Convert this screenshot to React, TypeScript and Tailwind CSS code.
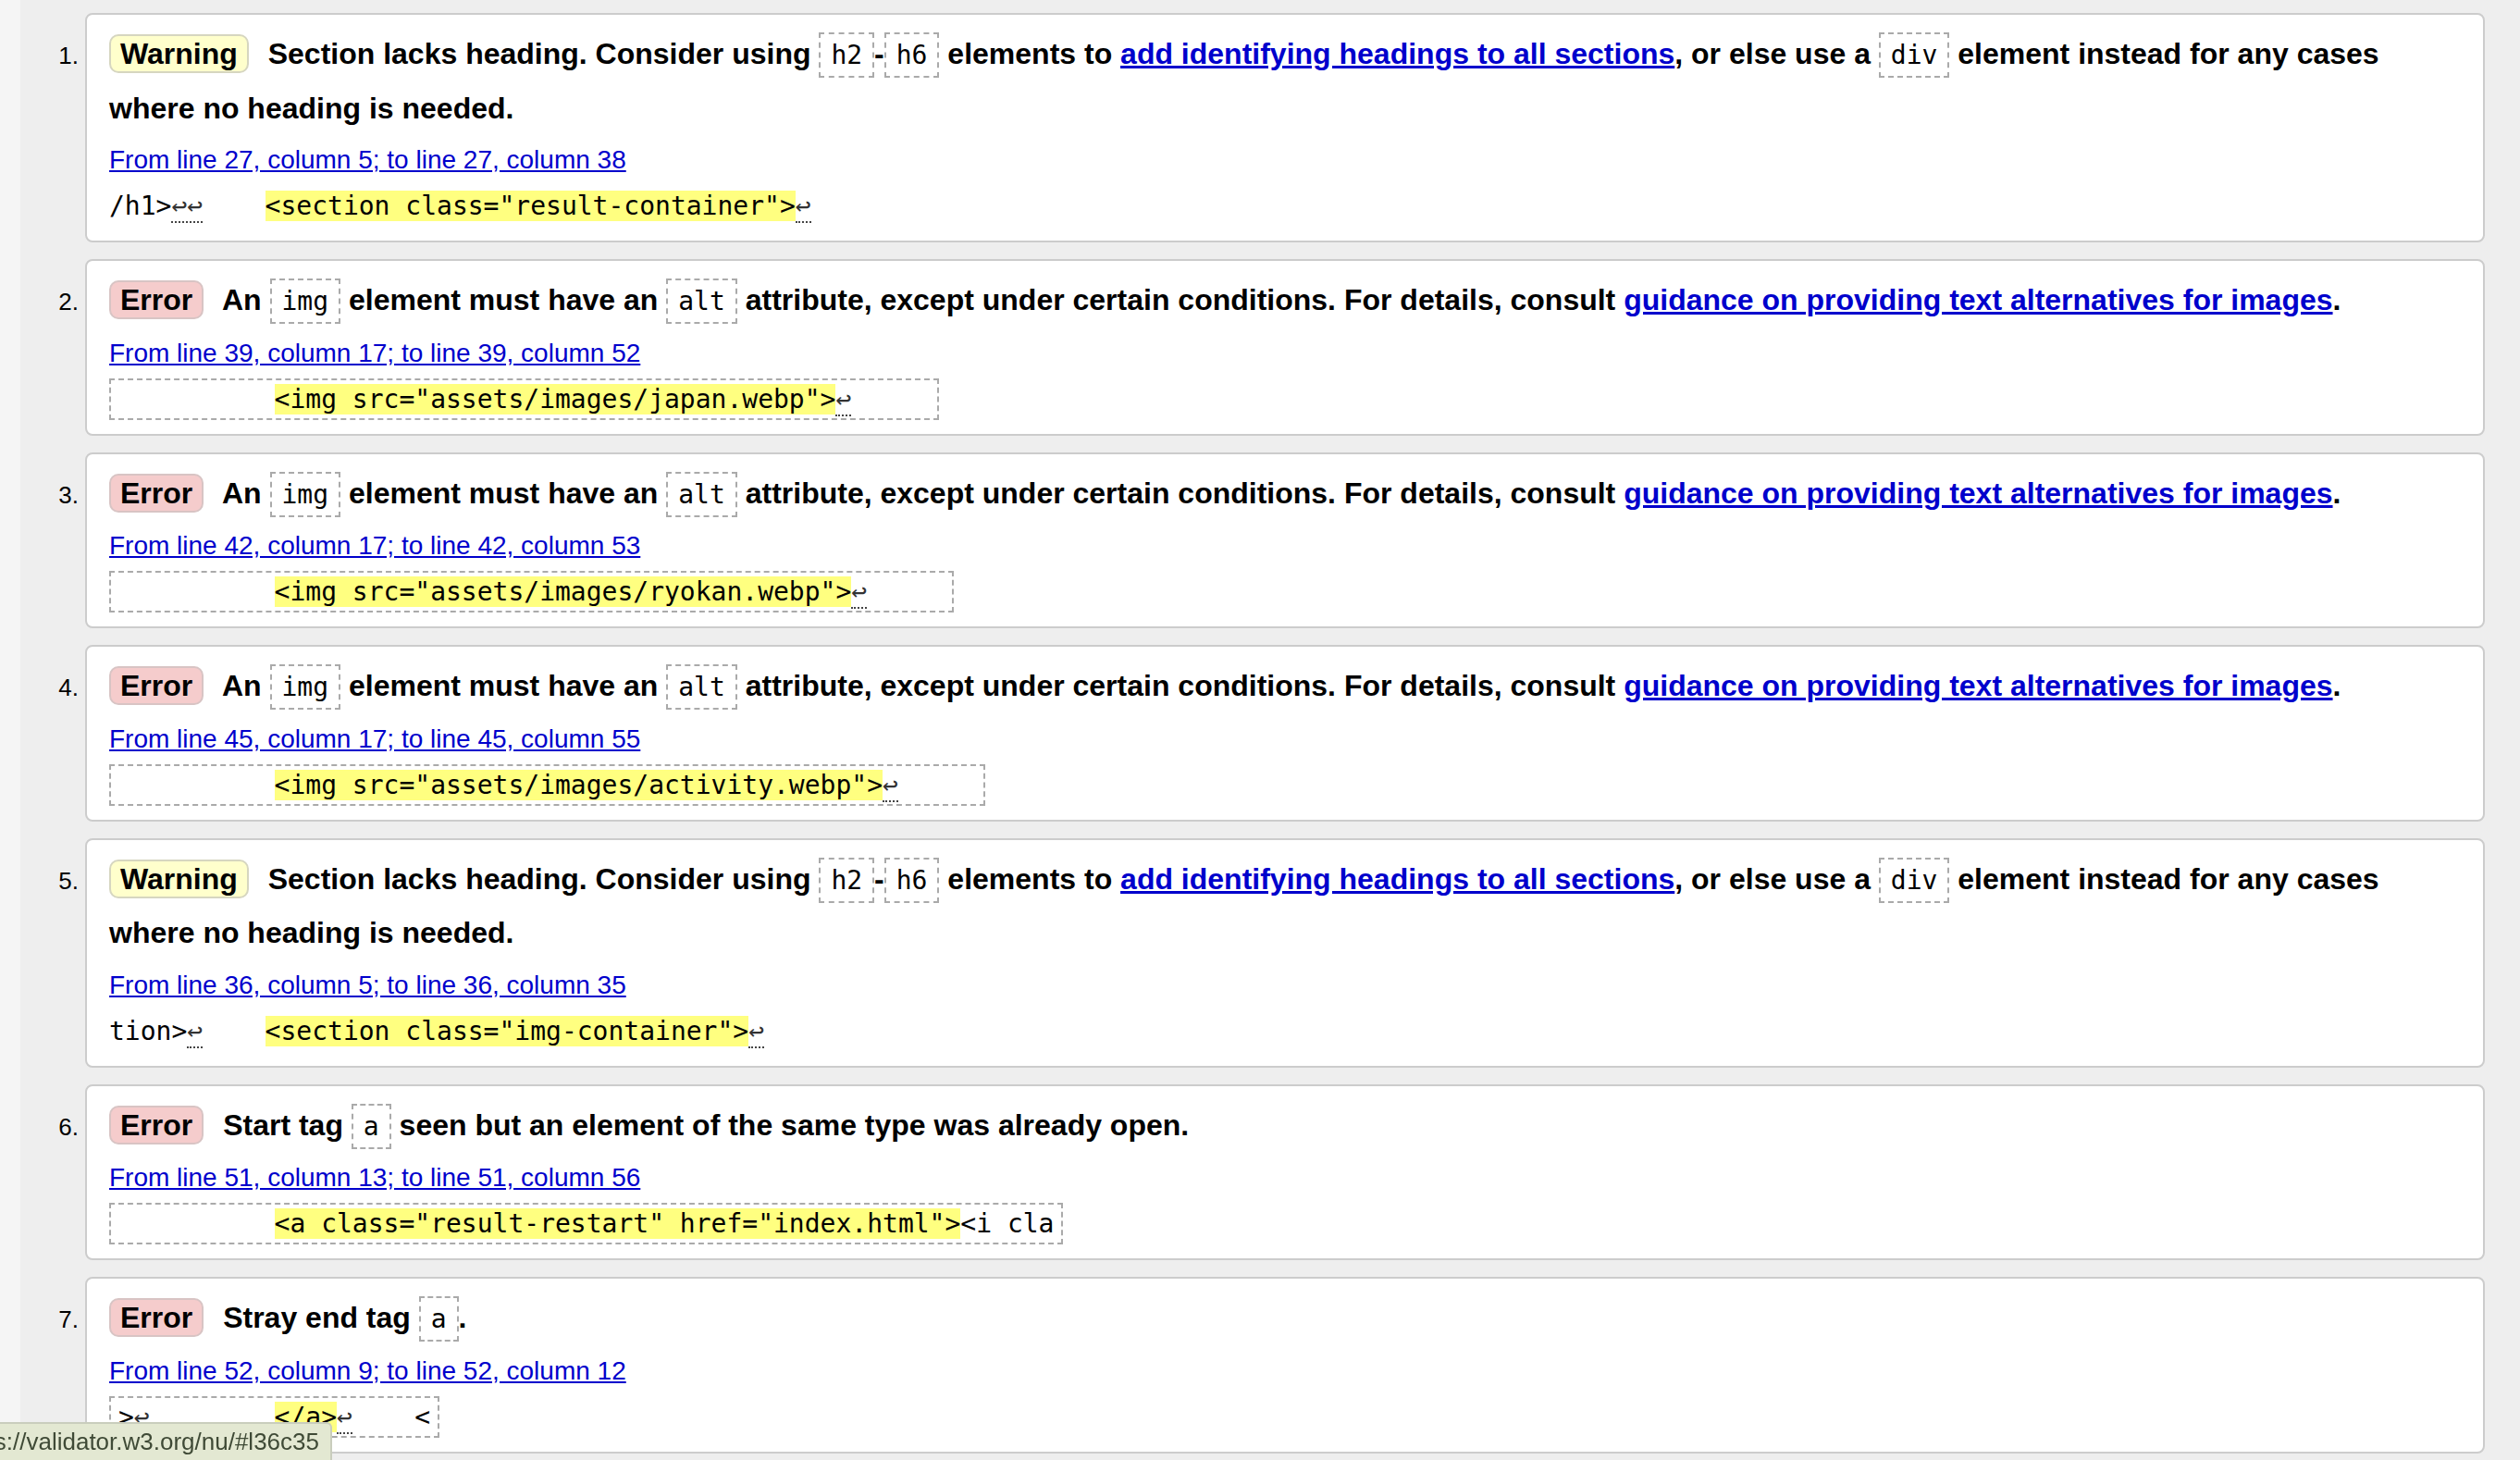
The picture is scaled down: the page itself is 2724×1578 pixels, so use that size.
import type { ReactNode } from 'react'

type Seg = { t: string; hl?: boolean; lf?: boolean }

type Msg = {
  kind: 'Warning' | 'Error'
  text: ReactNode
  loc: string
  boxed: boolean
  extract: Seg[]
}

const Code = ({ children }: { children: ReactNode }) => (
  <code className="rounded-none border-2 border-dashed border-[#aaa] px-[11px] py-[6px] font-['DejaVu_Sans_Mono',monospace] text-[28px] font-normal">
    {children}
  </code>
)

const A = ({ children }: { children: ReactNode }) => (
  <a href="#" className="text-[#0000cc] underline">
    {children}
  </a>
)

const headingText = (
  <>
    Section lacks heading. Consider using <Code>h2</Code>-<Code>h6</Code> elements to{' '}
    <A>add identifying headings to all sections</A>, or else use a <Code>div</Code> element
    instead for any cases where no heading is needed.
  </>
)

const imgText = (
  <>
    An <Code>img</Code> element must have an <Code>alt</Code> attribute, except under certain
    conditions. For details, consult <A>guidance on providing text alternatives for images</A>.
  </>
)

const MESSAGES: Msg[] = [
  {
    kind: 'Warning',
    text: headingText,
    loc: 'From line 27, column 5; to line 27, column 38',
    boxed: false,
    extract: [
      { t: '/h1>' },
      { t: '↩↩', lf: true },
      { t: '    ' },
      { t: '<section class="result-container">', hl: true },
      { t: '↩', lf: true },
    ],
  },
  {
    kind: 'Error',
    text: imgText,
    loc: 'From line 39, column 17; to line 39, column 52',
    boxed: true,
    extract: [
      { t: '          ' },
      { t: '<img src="assets/images/japan.webp">', hl: true },
      { t: '↩', lf: true },
      { t: '     ' },
    ],
  },
  {
    kind: 'Error',
    text: imgText,
    loc: 'From line 42, column 17; to line 42, column 53',
    boxed: true,
    extract: [
      { t: '          ' },
      { t: '<img src="assets/images/ryokan.webp">', hl: true },
      { t: '↩', lf: true },
      { t: '     ' },
    ],
  },
  {
    kind: 'Error',
    text: imgText,
    loc: 'From line 45, column 17; to line 45, column 55',
    boxed: true,
    extract: [
      { t: '          ' },
      { t: '<img src="assets/images/activity.webp">', hl: true },
      { t: '↩', lf: true },
      { t: '     ' },
    ],
  },
  {
    kind: 'Warning',
    text: headingText,
    loc: 'From line 36, column 5; to line 36, column 35',
    boxed: false,
    extract: [
      { t: 'tion>' },
      { t: '↩', lf: true },
      { t: '    ' },
      { t: '<section class="img-container">', hl: true },
      { t: '↩', lf: true },
    ],
  },
  {
    kind: 'Error',
    text: (
      <>
        Start tag <Code>a</Code> seen but an element of the same type was already open.
      </>
    ),
    loc: 'From line 51, column 13; to line 51, column 56',
    boxed: true,
    extract: [
      { t: '          ' },
      { t: '<a class="result-restart" href="index.html">', hl: true },
      { t: '<i cla' },
    ],
  },
  {
    kind: 'Error',
    text: (
      <>
        Stray end tag <Code>a</Code>.
      </>
    ),
    loc: 'From line 52, column 9; to line 52, column 12',
    boxed: true,
    extract: [
      { t: '>' },
      { t: '↩', lf: true },
      { t: '        ' },
      { t: '</a>', hl: true },
      { t: '↩', lf: true },
      { t: '    <' },
    ],
  },
]

function Extract({ boxed, segs }: { boxed: boolean; segs: Seg[] }) {
  return (
    <div className="mt-[11px] flex">
      <span
        className={
          boxed
            ? "block border-2 border-dashed border-[#aaa] px-[8px] py-[4px] font-['DejaVu_Sans_Mono',monospace] text-[28px] leading-[33px] whitespace-pre text-black"
            : "block py-[6px] font-['DejaVu_Sans_Mono',monospace] text-[28px] leading-[33px] whitespace-pre text-black"
        }
      >
        {segs.map((s, i) =>
          s.hl ? (
            <mark key={i} className="bg-[#ffff80] text-black">
              {s.t}
            </mark>
          ) : s.lf ? (
            <b key={i} className="border-b-2 border-dotted border-[#444] font-normal text-[#333]">
              {s.t}
            </b>
          ) : (
            <span key={i}>{s.t}</span>
          ),
        )}
      </span>
    </div>
  )
}

export default function App() {
  return (
    <div className="flex h-screen overflow-hidden bg-[#eeeeee] font-['Liberation_Sans',Arial,sans-serif] text-black">
      <div className="w-[22px] shrink-0 bg-[#f5f5f5]" />
      <ol className="flex flex-1 flex-col gap-[18px] pt-[14px] pr-[38px]">
        {MESSAGES.map((m, i) => (
          <li key={i} className="flex items-baseline">
            <span className="w-[70px] shrink-0 pr-[7px] text-right text-[26px]">{i + 1}.</span>
            <div className="flex-1 rounded-[8px] border-2 border-[#cccccc] bg-white pt-[14px] pr-[24px] pb-[15px] pl-[24px]">
              <p className="text-[32px] leading-[57.5px] font-bold">
                <strong
                  className={
                    m.kind === 'Warning'
                      ? 'mr-[12px] inline-block rounded-[10px] border-2 border-[#d6d6c0] bg-[#ffffcc] px-[10px] leading-[38px]'
                      : 'mr-[12px] inline-block rounded-[10px] border-2 border-[#d8c4c4] bg-[#f5cccc] px-[10px] leading-[38px]'
                  }
                >
                  {m.kind}
                </strong>{' '}
                {m.text}
              </p>
              <p className="mt-[11px] text-[28px] leading-[32px]">
                <a href="#" className="text-[#0000cc] underline">
                  {m.loc}
                </a>
              </p>
              <Extract boxed={m.boxed} segs={m.extract} />
            </div>
          </li>
        ))}
      </ol>
      <div className="fixed bottom-0 left-0 flex h-[41px] w-[359px] items-center justify-end overflow-hidden rounded-tr-[6px] border-t-2 border-r-2 border-[#c9cdbd] bg-[#e3e8d2] pr-[12px] text-[26px] whitespace-nowrap text-[#3f4a36]">
        https://validator.w3.org/nu/#l36c35
      </div>
    </div>
  )
}
